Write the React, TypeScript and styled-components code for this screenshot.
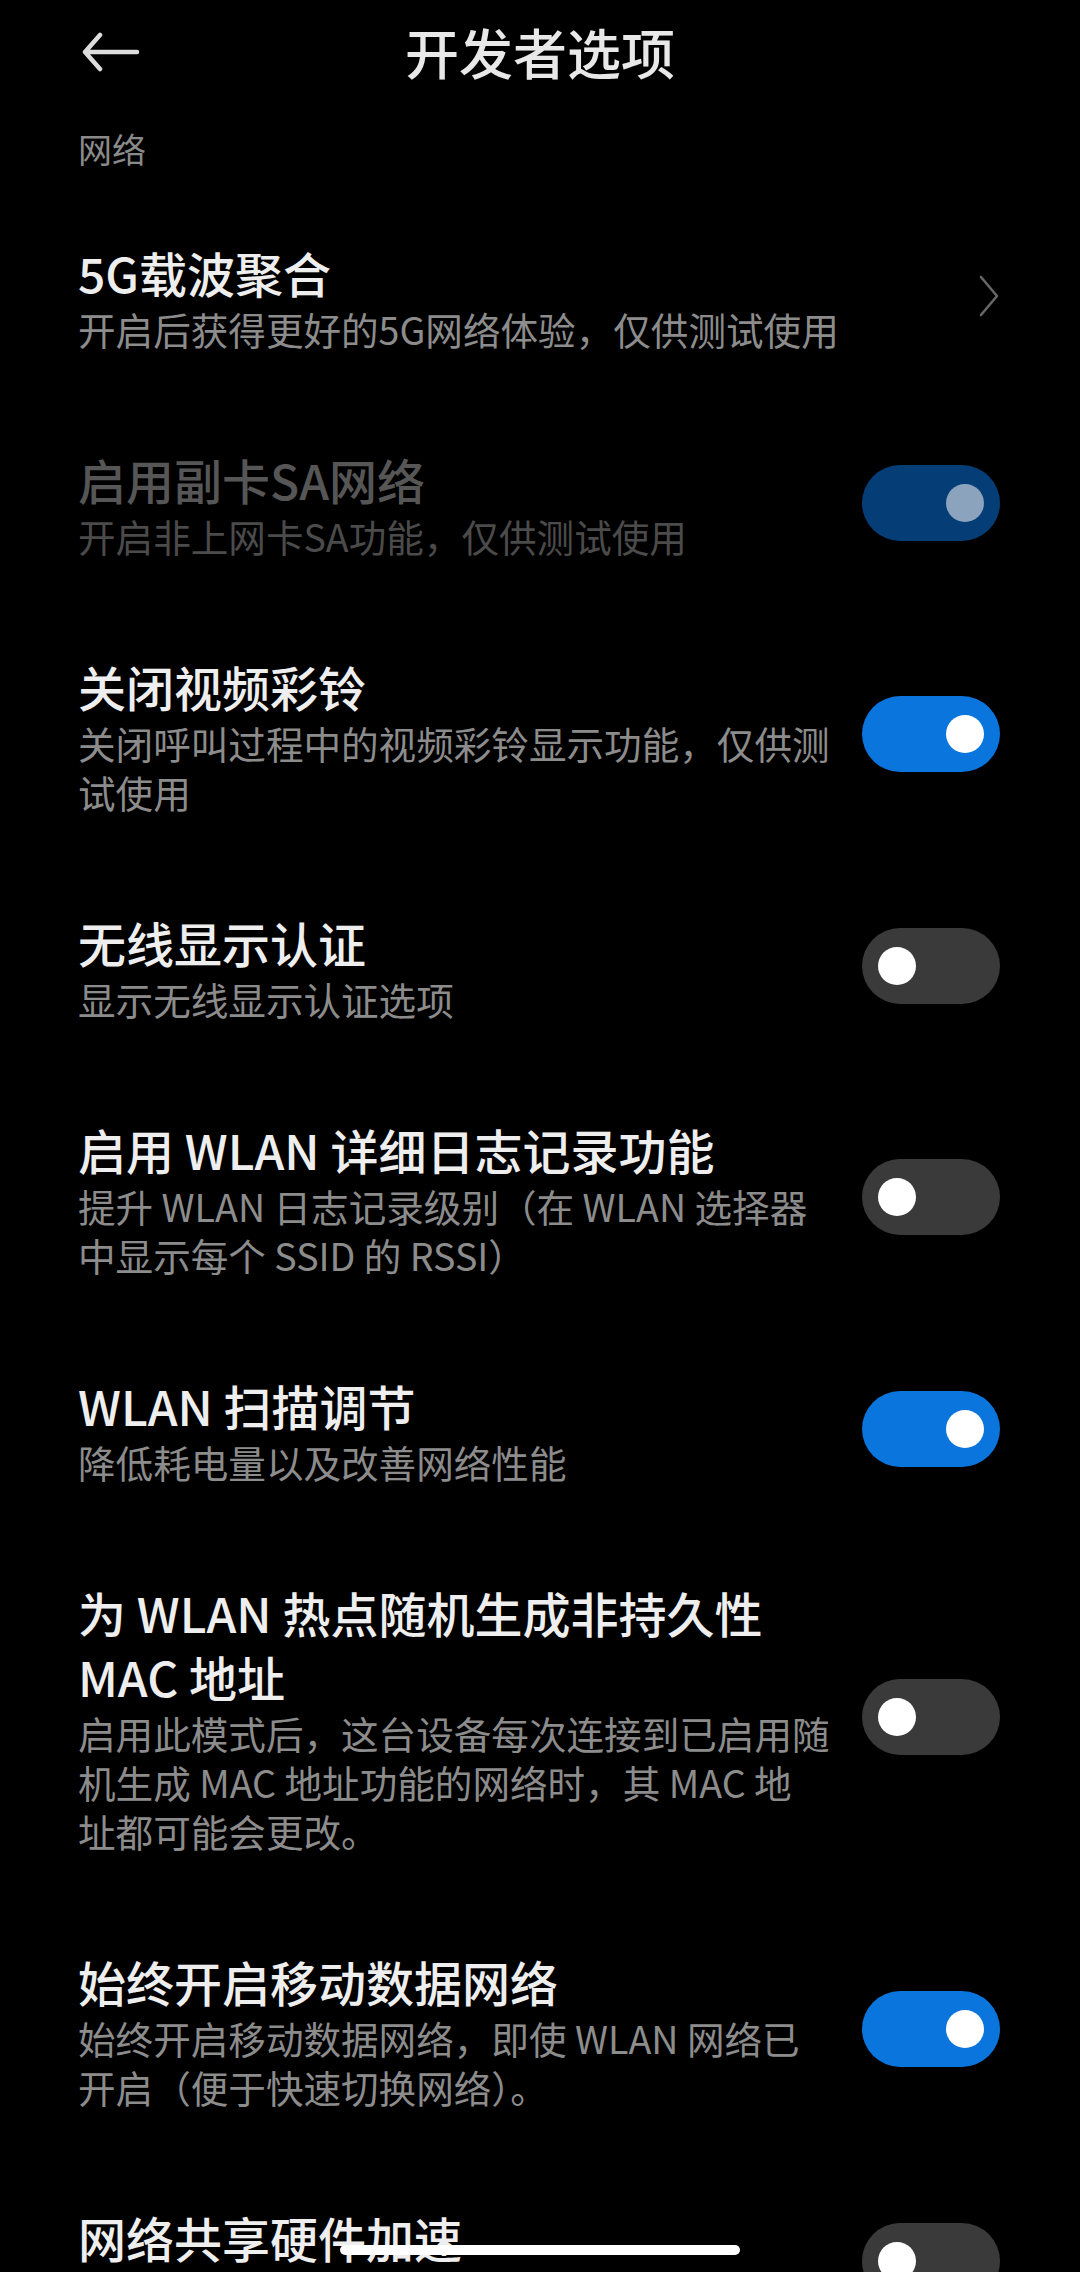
import styled, { createGlobalStyle } from "styled-components";

const GlobalStyle = createGlobalStyle`
  html, body {
    margin: 0;
    padding: 0;
    background: #000;
  }
  body {
    font-family: "Noto Sans CJK SC", "Noto Sans", sans-serif;
    -webkit-font-smoothing: antialiased;
  }
`;

const Page = styled.div`
  width: 1080px;
  height: 2272px;
  overflow: hidden;
  background: #000;
  color: #eeeeee;
`;

const Header = styled.header`
  height: 108px;
  display: grid;
  grid-template-columns: 1fr auto 1fr;
  align-items: center;
  padding: 0 82px;
  box-sizing: border-box;
`;

const BackButton = styled.button`
  justify-self: start;
  background: none;
  border: 0;
  padding: 0;
  margin-top: -4px;
  display: flex;
  cursor: pointer;
`;

const Title = styled.h1`
  margin: -5px 0 0;
  font-size: 54px;
  line-height: 64px;
  font-weight: 500;
  color: #e8e8e8;
`;

const SectionLabel = styled.div`
  padding: 17px 78px 24px;
  font-size: 34px;
  line-height: 48px;
  color: #8a8a8a;
`;

const Row = styled.div`
  display: flex;
  align-items: center;
  gap: 22px;
  padding: 43px 80px 51px 78px;
`;

const TextBlock = styled.div`
  flex: 1;
  min-width: 0;
`;

const ItemTitle = styled.div<{ $disabled?: boolean }>`
  font-size: 48px;
  line-height: 64px;
  font-weight: 500;
  white-space: pre-line;
  color: ${(p) => (p.$disabled ? "#565656" : "#eeeeee")};
`;

const ItemDesc = styled.div<{ $disabled?: boolean }>`
  font-size: 37.6px;
  line-height: 49px;
  white-space: pre-line;
  color: ${(p) => (p.$disabled ? "#4b4b4b" : "#8c8c8c")};
`;

const Trailing = styled.div`
  width: 138px;
  flex-shrink: 0;
  display: flex;
  justify-content: flex-end;
  margin-bottom: 2px;
`;

const Track = styled.div<{ $on: boolean; $disabled?: boolean }>`
  width: 138px;
  height: 76px;
  border-radius: 38px;
  padding: 0 16px;
  box-sizing: border-box;
  display: flex;
  align-items: center;
  justify-content: ${(p) => (p.$on ? "flex-end" : "flex-start")};
  background: ${(p) =>
    p.$disabled ? "#053e76" : p.$on ? "#0a75dd" : "#3a3a3a"};
`;

const Knob = styled.div<{ $disabled?: boolean }>`
  width: 38px;
  height: 38px;
  border-radius: 50%;
  background: ${(p) => (p.$disabled ? "#8ba3bd" : "#ffffff")};
`;

const HomeBar = styled.div`
  position: fixed;
  left: 50%;
  bottom: 17px;
  transform: translateX(-50%);
  width: 400px;
  height: 10px;
  border-radius: 5px;
  background: #ffffff;
`;

type Item = {
  title: string;
  desc?: string;
  kind: "link" | "toggle";
  on?: boolean;
  disabled?: boolean;
};

const items: Item[] = [
  {
    title: "5G载波聚合",
    desc: "开启后获得更好的5G网络体验，仅供测试使用",
    kind: "link",
  },
  {
    title: "启用副卡SA网络",
    desc: "开启非上网卡SA功能，仅供测试使用",
    kind: "toggle",
    on: true,
    disabled: true,
  },
  {
    title: "关闭视频彩铃",
    desc: "关闭呼叫过程中的视频彩铃显示功能，仅供测试使用",
    kind: "toggle",
    on: true,
  },
  {
    title: "无线显示认证",
    desc: "显示无线显示认证选项",
    kind: "toggle",
    on: false,
  },
  {
    title: "启用 WLAN 详细日志记录功能",
    desc: "提升 WLAN 日志记录级别（在 WLAN 选择器\n中显示每个 SSID 的 RSSI）",
    kind: "toggle",
    on: false,
  },
  {
    title: "WLAN 扫描调节",
    desc: "降低耗电量以及改善网络性能",
    kind: "toggle",
    on: true,
  },
  {
    title: "为 WLAN 热点随机生成非持久性\nMAC 地址",
    desc: "启用此模式后，这台设备每次连接到已启用随\n机生成 MAC 地址功能的网络时，其 MAC 地\n址都可能会更改。",
    kind: "toggle",
    on: false,
  },
  {
    title: "始终开启移动数据网络",
    desc: "始终开启移动数据网络，即使 WLAN 网络已\n开启（便于快速切换网络）。",
    kind: "toggle",
    on: true,
  },
  {
    title: "网络共享硬件加速",
    desc: "如果可用，可使用网络共享硬件加速",
    kind: "toggle",
    on: false,
  },
];

const BackArrow = () => (
  <svg width="58" height="40" viewBox="0 0 58 40" fill="none">
    <path
      d="M3 20 H55 M18 3 L3 20 L18 37"
      stroke="#dddddd"
      strokeWidth="4.5"
      strokeLinecap="round"
      strokeLinejoin="round"
    />
  </svg>
);

const Chevron = () => (
  <svg width="22" height="42" viewBox="0 0 22 42" fill="none">
    <path
      d="M3 2 L19 21 L3 40"
      stroke="#666666"
      strokeWidth="2.6"
      strokeLinecap="round"
      strokeLinejoin="round"
    />
  </svg>
);

const Toggle = ({ on, disabled }: { on: boolean; disabled?: boolean }) => (
  <Track $on={on} $disabled={disabled}>
    <Knob $disabled={disabled} />
  </Track>
);

export default function App() {
  return (
    <Page>
      <GlobalStyle />
      <Header>
        <BackButton aria-label="返回">
          <BackArrow />
        </BackButton>
        <Title>开发者选项</Title>
        <span />
      </Header>
      <SectionLabel>网络</SectionLabel>
      {items.map((item) => (
        <Row key={item.title}>
          <TextBlock>
            <ItemTitle $disabled={item.disabled}>{item.title}</ItemTitle>
            {item.desc && (
              <ItemDesc $disabled={item.disabled}>{item.desc}</ItemDesc>
            )}
          </TextBlock>
          <Trailing>
            {item.kind === "link" ? (
              <Chevron />
            ) : (
              <Toggle on={!!item.on} disabled={item.disabled} />
            )}
          </Trailing>
        </Row>
      ))}
      <HomeBar />
    </Page>
  );
}
